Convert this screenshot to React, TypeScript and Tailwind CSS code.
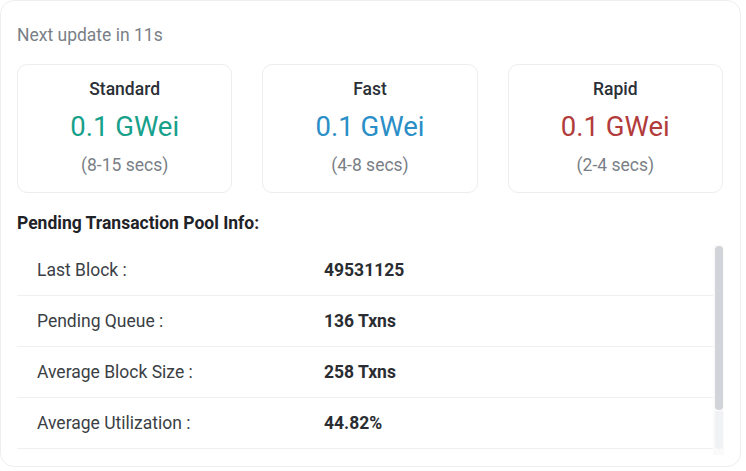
import type { FC } from 'react'

const SPEEDS = [
  { name: 'Standard', value: '0.1 GWei', eta: '(8-15 secs)', color: 'text-[#17a08a]' },
  { name: 'Fast', value: '0.1 GWei', eta: '(4-8 secs)', color: 'text-[#2a8ec7]' },
  { name: 'Rapid', value: '0.1 GWei', eta: '(2-4 secs)', color: 'text-[#b23b3b]' },
]

const POOL = [
  { label: 'Last Block :', value: '49531125' },
  { label: 'Pending Queue :', value: '136 Txns' },
  { label: 'Average Block Size :', value: '258 Txns' },
  { label: 'Average Utilization :', value: '44.82%' },
]

const GasCard: FC<(typeof SPEEDS)[number]> = ({ name, value, eta, color }) => (
  <div className="flex h-[129px] flex-col items-center rounded-[10px] border border-[#ebedf0] bg-white pt-[13px]">
    <div className="text-[17.5px] font-medium leading-[22px] text-[#2b2f36]">{name}</div>
    <div className={`mt-[10px] text-[27.5px] leading-[34px] ${color}`}>{value}</div>
    <div className="mt-[10px] text-[17.5px] leading-[22px] text-[#7a7f87]">{eta}</div>
  </div>
)

const App: FC = () => {
  return (
    <div className="min-h-screen bg-white font-['Roboto','Liberation_Sans',sans-serif]">
      <div className="h-[467px] w-[741px] overflow-hidden rounded-[14px] border border-[#eceef1] bg-white px-[16px] pt-[23px]">
        <div className="text-[17.5px] leading-[22px] text-[#7a7f87]">Next update in 11s</div>

        <div className="mt-[18px] grid grid-cols-3 gap-[30px] pr-[1px]">
          {SPEEDS.map(s => (
            <GasCard key={s.name} {...s} />
          ))}
        </div>

        <div className="mt-[19px] text-[17.5px] font-bold leading-[22px] text-[#1f2328]">
          Pending Transaction Pool Info:
        </div>

        <div className="mt-[11px] flex h-[210px]">
          <div className="flex-1 overflow-hidden">
            {POOL.map(row => (
              <div
                key={row.label}
                className="flex h-[51px] items-center border-b border-[#eef0f2] pl-[20px] text-[17.5px]"
              >
                <div className="w-[287px] text-[#3b3f45]">{row.label}</div>
                <div className="font-bold text-[#2a2d32]">{row.value}</div>
              </div>
            ))}
          </div>
          <div className="flex w-[11px] flex-col items-center bg-[#fafafa]">
            <div className="mt-[1px] h-[164px] w-[8px] rounded-[4px] bg-[#d2d4d9]" />
            <div className="mt-[1px] h-[38px] w-[8px] rounded-b-[4px] bg-[#f1f2f4]" />
          </div>
        </div>
      </div>
    </div>
  )
}

export default App
